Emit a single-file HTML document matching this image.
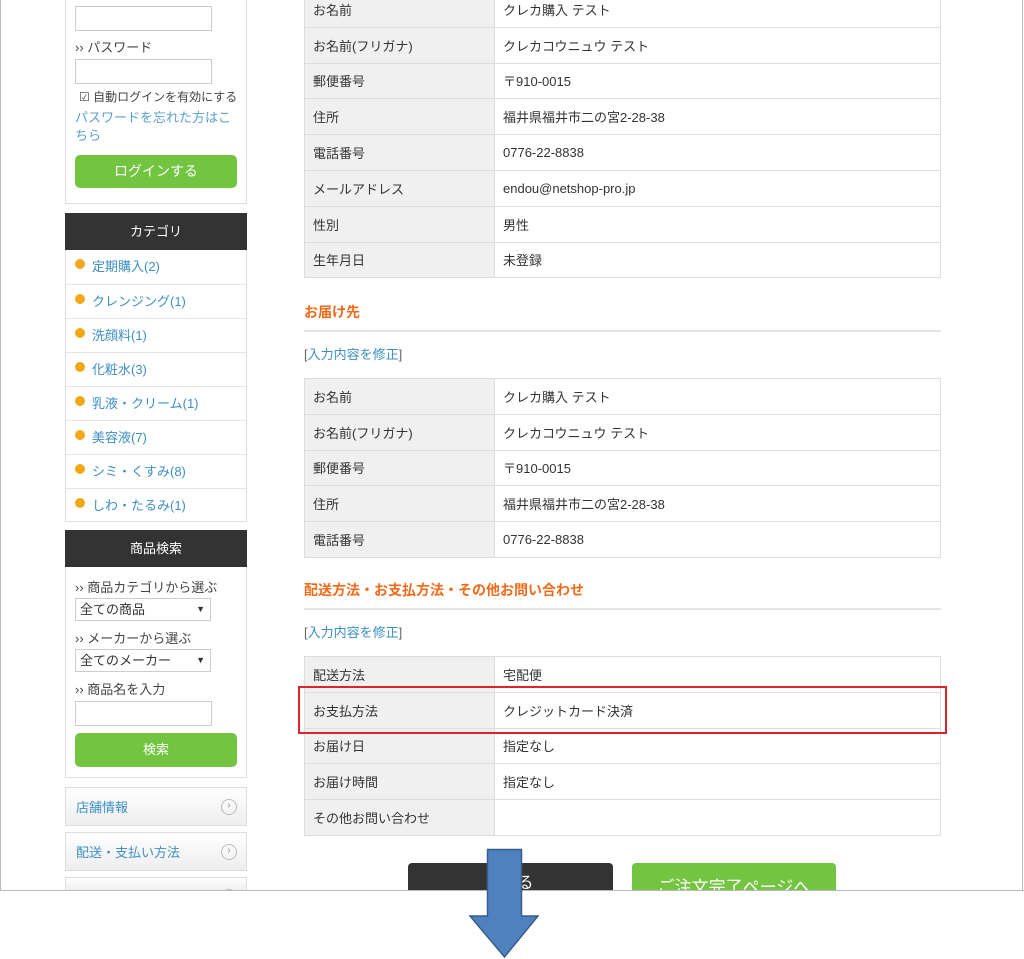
<!DOCTYPE html>
<html><head><meta charset="utf-8"><style>
*{box-sizing:border-box;margin:0;padding:0}
body{width:1024px;height:959px;background:#fff;position:relative;overflow:hidden;font-family:"Liberation Sans","Noto Sans CJK JP",sans-serif;font-size:13px;color:#333}
.a{position:absolute}
.frame{left:0;top:-2px;width:1023px;height:893px;border:1px solid #bbb;border-top:none}
.box{border:1px solid #ddd;background:#fff}
.inp{border:1px solid #ccc;background:#fff;height:25px;width:137px}
.btn{background:#72c441;color:#fff;border-radius:5px;text-align:center;font-size:14px}
.hd{background:#333;color:#fff;text-align:center;font-size:13px}
.lab{font-size:13px;color:#444}
.cat{left:66px;width:180px;height:34px;border-top:1px solid #e5e5e5;color:#3d8fc4;font-size:13px;padding:6px 0 0 26px}
.cat:before{content:"";position:absolute;left:9px;top:9px;width:10px;height:10px;border-radius:50%;background:#f2a818}
.lk{left:65px;width:182px;height:39px;border:1px solid #ddd;background:linear-gradient(#fff,#eee);color:#3d8fc4;padding:9px 0 0 10px;font-size:13px}
.lk:after{content:"›";position:absolute;right:9px;top:11px;width:14px;height:14px;border:1px solid #bbb;border-radius:50%;font-size:10px;line-height:12px;text-align:center;color:#888}
table{position:absolute;left:304px;width:637px;border-collapse:collapse}
td{border:1px solid #ddd;height:35.8px;padding:0 8px;font-size:13px;color:#333}
td:first-child{background:#f0f0f0;width:190px}
.h2{left:304px;color:#f06a1a;font-weight:bold;font-size:14px}
.ln{left:304px;width:637px;height:2px;background:#e4e4e4}
.ed{left:304px;font-size:13px;color:#3d8fc4}
.ed span{color:#666}
.sel{left:75px;width:136px;height:23px;border:1px solid #ccc;padding:0 4px;font-size:13px;line-height:21px}
</style></head><body>
<div class="a frame"></div>
<div class="a box" style="left:65px;top:-2px;width:182px;height:206px"></div>
<div class="a inp" style="left:75px;top:6px"></div>
<div class="a lab" style="left:75px;top:37px">›› パスワード</div>
<div class="a inp" style="left:75px;top:59px"></div>
<div class="a lab" style="left:79px;top:88px;font-size:12px">☑ 自動ログインを有効にする</div>
<div class="a" style="left:75px;top:109px;width:164px;color:#5aa0d0;font-size:13px;line-height:18px">パスワードを忘れた方はこちら</div>
<div class="a btn" style="left:75px;top:155px;width:162px;height:33px;line-height:33px">ログインする</div>

<div class="a hd" style="left:65px;top:213px;width:182px;height:37px;line-height:37px">カテゴリ</div>
<div class="a box" style="left:65px;top:250px;width:182px;height:272px;border-top:none"></div>
<div class="a cat" style="top:250px;border-top:none">定期購入(2)</div>
<div class="a cat" style="top:284px">クレンジング(1)</div>
<div class="a cat" style="top:318px">洗顔料(1)</div>
<div class="a cat" style="top:352px">化粧水(3)</div>
<div class="a cat" style="top:386px">乳液・クリーム(1)</div>
<div class="a cat" style="top:420px">美容液(7)</div>
<div class="a cat" style="top:454px">シミ・くすみ(8)</div>
<div class="a cat" style="top:488px">しわ・たるみ(1)</div>

<div class="a hd" style="left:65px;top:530px;width:182px;height:37px;line-height:37px">商品検索</div>
<div class="a box" style="left:65px;top:567px;width:182px;height:211px;border-top:none"></div>
<div class="a lab" style="left:75px;top:577px">›› 商品カテゴリから選ぶ</div>
<div class="a sel" style="top:598px">全ての商品<span style="position:absolute;right:5px;font-size:9px">▼</span></div>
<div class="a lab" style="left:75px;top:628px">›› メーカーから選ぶ</div>
<div class="a sel" style="top:649px">全てのメーカー<span style="position:absolute;right:5px;font-size:9px">▼</span></div>
<div class="a lab" style="left:75px;top:679px">›› 商品名を入力</div>
<div class="a inp" style="left:75px;top:701px"></div>
<div class="a btn" style="left:75px;top:733px;width:162px;height:34px;line-height:34px;font-size:13px">検索</div>
<div class="a lk" style="top:787px">店舗情報</div>
<div class="a lk" style="top:832px">配送・支払い方法</div>
<div class="a lk" style="top:877px;height:14px;border-bottom:none"></div>

<table style="top:-9px">
<tr><td>お名前</td><td>クレカ購入 テスト</td></tr>
<tr><td>お名前(フリガナ)</td><td>クレカコウニュウ テスト</td></tr>
<tr><td>郵便番号</td><td>〒910-0015</td></tr>
<tr><td>住所</td><td>福井県福井市二の宮2-28-38</td></tr>
<tr><td>電話番号</td><td>0776-22-8838</td></tr>
<tr><td>メールアドレス</td><td>endou@netshop-pro.jp</td></tr>
<tr><td>性別</td><td>男性</td></tr>
<tr><td>生年月日</td><td>未登録</td></tr>
</table>
<div class="a h2" style="top:302px">お届け先</div>
<div class="a ln" style="top:330px"></div>
<div class="a ed" style="top:344px"><span>[</span>入力内容を修正<span>]</span></div>
<table style="top:378px">
<tr><td>お名前</td><td>クレカ購入 テスト</td></tr>
<tr><td>お名前(フリガナ)</td><td>クレカコウニュウ テスト</td></tr>
<tr><td>郵便番号</td><td>〒910-0015</td></tr>
<tr><td>住所</td><td>福井県福井市二の宮2-28-38</td></tr>
<tr><td>電話番号</td><td>0776-22-8838</td></tr>
</table>
<div class="a h2" style="top:580px">配送方法・お支払方法・その他お問い合わせ</div>
<div class="a ln" style="top:608px"></div>
<div class="a ed" style="top:622px"><span>[</span>入力内容を修正<span>]</span></div>
<table style="top:656px">
<tr><td>配送方法</td><td>宅配便</td></tr>
<tr><td>お支払方法</td><td>クレジットカード決済</td></tr>
<tr><td>お届け日</td><td>指定なし</td></tr>
<tr><td>お届け時間</td><td>指定なし</td></tr>
<tr><td>その他お問い合わせ</td><td></td></tr>
</table>
<div class="a" style="left:298px;top:686px;width:649px;height:48px;border:2px solid #d9262c"></div>

<div class="a" style="left:408px;top:863px;width:205px;height:28px;background:#333;border-radius:4px 4px 0 0;overflow:hidden;color:#fff;font-size:16px;text-align:center;padding-top:6px;padding-left:30px">る</div>
<div class="a" style="left:632px;top:863px;width:204px;height:28px;background:#72c441;border-radius:4px 4px 0 0;overflow:hidden;color:#fff;font-size:17px;text-align:center;padding-top:10px">ご注文完了ページへ</div>
<div class="a" style="left:0;top:890px;width:1024px;height:69px;background:#fff;border-top:1px solid #bbb"></div>
<svg class="a" style="left:468px;top:848px" width="72" height="111"><path d="M19.5 1.5 H53.5 V68 H70 L36.5 109 L2 68 H19.5 Z" fill="#4f81bd" stroke="#385d8a" stroke-width="1.5"/></svg>
</body></html>
